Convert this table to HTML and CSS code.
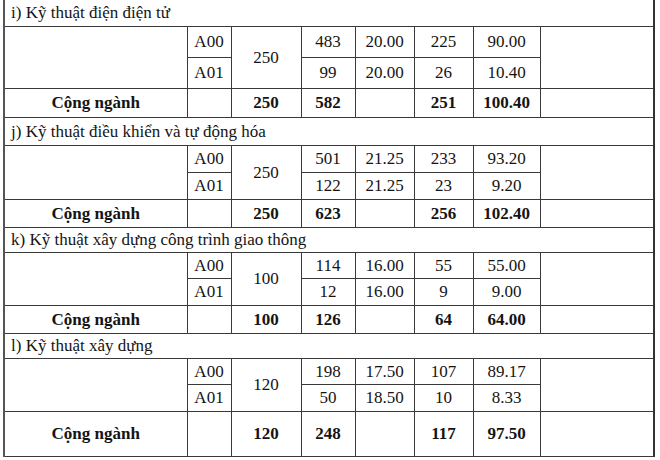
FILE: index.html
```html
<!DOCTYPE html>
<html lang="vi">
<head>
<meta charset="utf-8">
<title>Điểm chuẩn</title>
<link rel="stylesheet" href="styles.css">
</head>
<body>
<table class="sheet">
  <colgroup>
    <col class="c-name"><col class="c-block"><col class="c-quota"><col class="c-reg">
    <col class="c-score"><col class="c-adm"><col class="c-pct"><col class="c-note">
  </colgroup>
  <tbody>
    <tr class="title r-first"><td colspan="8">i) Kỹ thuật điện điện tử</td></tr>
    <tr class="r31"><td rowspan="2"></td><td>A00</td><td rowspan="2">250</td><td>483</td><td>20.00</td><td>225</td><td>90.00</td><td rowspan="2"></td></tr>
    <tr class="r31"><td>A01</td><td>99</td><td>20.00</td><td>26</td><td>10.40</td></tr>
    <tr class="total r29"><td>Cộng ngành</td><td></td><td>250</td><td>582</td><td></td><td>251</td><td>100.40</td><td></td></tr>

    <tr class="title r28"><td colspan="8">j) Kỹ thuật điều khiển và tự động hóa</td></tr>
    <tr class="r27"><td rowspan="2"></td><td>A00</td><td rowspan="2">250</td><td>501</td><td>21.25</td><td>233</td><td>93.20</td><td rowspan="2"></td></tr>
    <tr class="r27"><td>A01</td><td>122</td><td>21.25</td><td>23</td><td>9.20</td></tr>
    <tr class="total r28"><td>Cộng ngành</td><td></td><td>250</td><td>623</td><td></td><td>256</td><td>102.40</td><td></td></tr>

    <tr class="title r25"><td colspan="8">k) Kỹ thuật xây dựng công trình giao thông</td></tr>
    <tr class="r26"><td rowspan="2"></td><td>A00</td><td rowspan="2">100</td><td>114</td><td>16.00</td><td>55</td><td>55.00</td><td rowspan="2"></td></tr>
    <tr class="r27"><td>A01</td><td>12</td><td>16.00</td><td>9</td><td>9.00</td></tr>
    <tr class="total r28"><td>Cộng ngành</td><td></td><td>100</td><td>126</td><td></td><td>64</td><td>64.00</td><td></td></tr>

    <tr class="title r25"><td colspan="8">l) Kỹ thuật xây dựng</td></tr>
    <tr class="r26"><td rowspan="2"></td><td>A00</td><td rowspan="2">120</td><td>198</td><td>17.50</td><td>107</td><td>89.17</td><td rowspan="2"></td></tr>
    <tr class="r27"><td>A01</td><td>50</td><td>18.50</td><td>10</td><td>8.33</td></tr>
    <tr class="total r45"><td>Cộng ngành</td><td></td><td>120</td><td>248</td><td></td><td>117</td><td>97.50</td><td></td></tr>
  </tbody>
</table>
</body>
</html>
```

FILE: styles.css
```css
html, body {
  margin: 0;
  padding: 0;
  background: #ffffff;
}

body {
  font-family: "Liberation Serif", "Times New Roman", serif;
  font-size: 17px;
  color: #141414;
}

.sheet {
  border-collapse: collapse;
  table-layout: fixed;
  width: 652px;
  margin: -2px 0 0 3px;
  border-left: 2px solid #555;
  border-right: 2px solid #333;
}

.sheet td {
  border: 1px solid #3a3a3a;
  padding: 0;
  text-align: center;
  vertical-align: middle;
  line-height: 20px;
  white-space: nowrap;
}

.c-name  { width: 183px; }
.c-block { width: 44px; }
.c-quota { width: 70px; }
.c-reg   { width: 54px; }
.c-score { width: 59px; }
.c-adm   { width: 59px; }
.c-pct   { width: 67px; }
.c-note  { width: 114px; }

.title td {
  text-align: left;
  padding-left: 6px;
  border-left: 2px solid #555;
  border-right: 2px solid #333;
}

.total td {
  font-weight: bold;
}

.r-first { height: 28px; }
.r25 { height: 25px; }
.r26 { height: 26px; }
.r27 { height: 27px; }
.r28 { height: 28px; }
.r29 { height: 29px; }
.r31 { height: 31px; }
.r45 { height: 45px; }
```
